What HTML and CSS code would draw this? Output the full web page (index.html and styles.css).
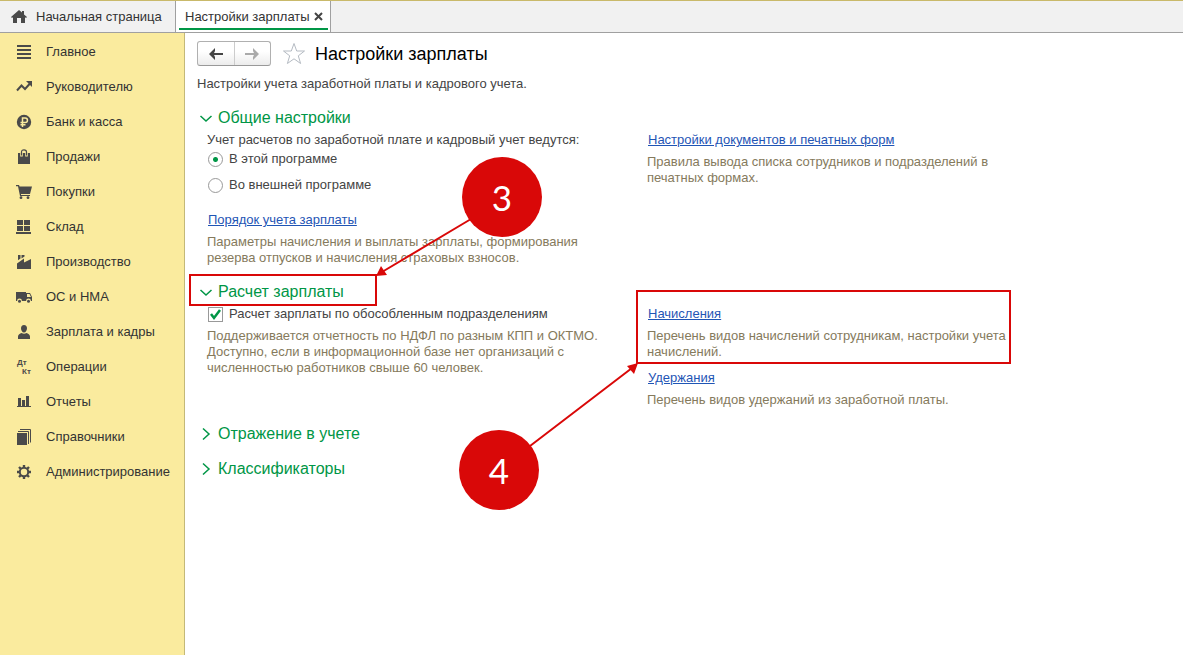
FILE: index.html
```html
<!DOCTYPE html>
<html lang="ru">
<head>
<meta charset="utf-8">
<title>Настройки зарплаты</title>
<link rel="stylesheet" href="styles.css">
</head>
<body>
<header class="tabs">
  <button class="tab tab-home" type="button">
    <svg class="home-icon" width="16" height="14" viewBox="0 0 16 14"><path d="M8 0 0 7l1 1 1-.7V13h4V8h4v5h4V7.300l1 .7 1-1-3-2.600V1h-2v1.600z"/></svg>
    <span>Начальная страница</span>
  </button>
  <div class="tab tab-active">
    <button class="tab-label" type="button">Настройки зарплаты</button>
    <button class="tab-close" type="button" aria-label="Закрыть"><svg width="9" height="9" viewBox="0 0 9 9"><path d="M1 1l7 7M8 1 1 8" fill="none" stroke="#444" stroke-width="2"/></svg></button>
  </div>
</header>
<div class="layout">
  <nav class="sidebar">
    <a href="#" class="nav-item"><svg class="icon" viewBox="0 0 16 16"><path d="M1 1h14v2H1zM1 5h14v2H1zM1 9h14v2H1zM1 13h14v2H1z"/></svg>Главное</a>
    <a href="#" class="nav-item"><svg class="icon" viewBox="0 0 16 16"><path d="M1 11.500 5.500 6.500l3.500 3.500 5-5.500" fill="none" stroke="#4a4a4a" stroke-width="2"/><path d="M10 2h6v6z"/></svg>Руководителю</a>
    <a href="#" class="nav-item"><svg class="icon" viewBox="0 0 16 16"><circle cx="8" cy="8" r="7.200"/><path d="M6.500 13V4h2.700a2.200 2.200 0 0 1 0 4.500H4.500M4.500 10.800h5" fill="none" stroke="#faeb9e" stroke-width="1.500"/></svg>Банк и касса</a>
    <a href="#" class="nav-item"><svg class="icon" viewBox="0 0 16 16"><path d="M2 4h12v11H2z"/><path d="M5.500 7.500V3.500Q5.500 1 8 1t2.500 2.500v4" fill="none" stroke="#faeb9e" stroke-width="2.600"/><path d="M5.500 6.500V3Q5.500 .8 8 .8t2.500 2.200v3.500" fill="none" stroke="#4a4a4a" stroke-width="1.200"/></svg>Продажи</a>
    <a href="#" class="nav-item"><svg class="icon" viewBox="0 0 16 16"><path d="M0 1h3l.6 1.500H16L14 10H5v1h9v1H4L2 2.200H0z"/><circle cx="5" cy="13.700" r="1.400"/><circle cx="12" cy="13.700" r="1.400"/></svg>Покупки</a>
    <a href="#" class="nav-item"><svg class="icon" viewBox="0 0 16 16"><path d="M1 1h6v5H1zM8 1h6v5H8zM1 7h6v5H1zM8 7h6v5H8zM0 13h15v2H0z"/></svg>Склад</a>
    <a href="#" class="nav-item"><svg class="icon" viewBox="0 0 16 16"><path d="M1 15V9.500l7-5V8.500L15 5v10zM2 1h2.500v3.500L2 6.300zM5.500 1H8.500v1.500l-3 2z"/></svg>Производство</a>
    <a href="#" class="nav-item"><svg class="icon" viewBox="0 0 16 16"><path fill-rule="evenodd" d="M0 3h10v1h4l2 4v4H0zM11 5v3h4l-1.500-3z"/><circle cx="3.500" cy="12" r="2.400" fill="#faeb9e"/><circle cx="12.500" cy="12" r="2.400" fill="#faeb9e"/><circle cx="3.500" cy="12.300" r="1.500"/><circle cx="12.500" cy="12.300" r="1.500"/></svg>ОС и НМА</a>
    <a href="#" class="nav-item"><svg class="icon" viewBox="0 0 16 16"><path d="M8 1c2 0 3 1.300 3 3.200S9.800 8.500 8 8.500 5 6.100 5 4.200 6 1 8 1zM2 15v-2.500C2 10.500 4 9.500 5.500 9q2.500 1.500 5 0c1.500.5 3.500 1.500 3.500 3.500V15z"/></svg>Зарплата и кадры</a>
    <a href="#" class="nav-item"><svg class="icon" viewBox="0 0 16 16"><text class="icon-text" x="1" y="6">Дт</text><text class="icon-text" x="6" y="15">Кт</text></svg>Операции</a>
    <a href="#" class="nav-item"><svg class="icon" viewBox="0 0 16 16"><path d="M2 4h3v8H2zM6 6h3v6H6zM10 2h3v10h-3zM1 12h14v1H1z"/></svg>Отчеты</a>
    <a href="#" class="nav-item"><svg class="icon" viewBox="0 0 16 16"><path d="M1 4h10v12H1z"/><path d="M2 2.500h10.500V15M4 .5h10.500v13" fill="none" stroke="#4a4a4a"/></svg>Справочники</a>
    <a href="#" class="nav-item"><svg class="icon" viewBox="0 0 16 16"><circle cx="8" cy="8" r="4.200" fill="none" stroke="#4a4a4a" stroke-width="2"/><path d="M8 1v3M8 12v3M1 8h3M12 8h3M3 3l2 2M11 11l2 2M13 3l-2 2M5 11l-2 2" stroke="#4a4a4a" stroke-width="2.400"/></svg>Администрирование</a>
  </nav>
  <main class="content">
    <div class="toolbar">
      <div class="history">
        <button type="button" aria-label="Назад"><svg width="14" height="12" viewBox="0 0 14 12"><path d="M0 6 6 0v3L5 5h9v2H5l1 2v3z" fill="#444"/></svg></button>
        <button type="button" aria-label="Вперед"><svg width="14" height="12" viewBox="0 0 14 12"><path d="M14 6 8 0v3l1 2H0v2h9L8 9v3z" fill="#aaa"/></svg></button>
      </div>
      <button class="star" type="button" aria-label="В избранное"><svg width="24" height="24" viewBox="0 0 24 24"><path d="M12 1.500 14.700 9h7.800l-6.200 4.800 2.300 7.700-6.600-4.700-6.600 4.700 2.300-7.700L1.500 9h7.800z" fill="none" stroke="#b4bac2"/></svg></button>
      <h1 class="title">Настройки зарплаты</h1>
    </div>
    <p class="lead">Настройки учета заработной платы и кадрового учета.</p>

    <section class="section general">
      <h2><button class="section-toggle" type="button" aria-expanded="true"><svg width="14" height="14" viewBox="0 0 14 14"><path d="M1.500 5 7 10l5.500-5"/></svg>Общие настройки</button></h2>
      <div class="columns">
        <div>
          <fieldset class="options">
            <legend>Учет расчетов по заработной плате и кадровый учет ведутся:</legend>
            <label class="option"><input type="radio" name="place" checked>В этой программе</label>
            <label class="option"><input type="radio" name="place">Во внешней программе</label>
          </fieldset>
          <a class="link" href="#">Порядок учета зарплаты</a>
          <p class="hint">Параметры начисления и выплаты зарплаты, формирования<br>резерва отпусков и начисления страховых взносов.</p>
        </div>
        <div>
          <a class="link" href="#">Настройки документов и печатных форм</a>
          <p class="hint">Правила вывода списка сотрудников и подразделений в<br>печатных формах.</p>
        </div>
      </div>
    </section>

    <section class="section payroll">
      <h2><button class="section-toggle" type="button" aria-expanded="true"><svg width="14" height="14" viewBox="0 0 14 14"><path d="M1.500 5 7 10l5.500-5"/></svg>Расчет зарплаты</button></h2>
      <div class="columns">
        <div>
          <label class="option check"><input type="checkbox" checked>Расчет зарплаты по обособленным подразделениям</label>
          <p class="hint">Поддерживается отчетность по НДФЛ по разным КПП и ОКТМО.<br>Доступно, если в информационной базе нет организаций с<br>численностью работников свыше 60 человек.</p>
        </div>
        <div>
          <a class="link" href="#">Начисления</a>
          <p class="hint">Перечень видов начислений сотрудникам, настройки учета<br>начислений.</p>
          <a class="link next" href="#">Удержания</a>
          <p class="hint">Перечень видов удержаний из заработной платы.</p>
        </div>
      </div>
    </section>

    <section class="section closed">
      <h2><button class="section-toggle" type="button" aria-expanded="false"><svg width="14" height="14" viewBox="0 0 14 14"><path d="m4 1.500 6 5.500-6 5.500"/></svg>Отражение в учете</button></h2>
    </section>
    <section class="section closed">
      <h2><button class="section-toggle" type="button" aria-expanded="false"><svg width="14" height="14" viewBox="0 0 14 14"><path d="m4 1.500 6 5.500-6 5.500"/></svg>Классификаторы</button></h2>
    </section>
  </main>
</div>
<svg class="callouts" width="1020" height="520" viewBox="0 0 1020 520">
  <g fill="none" stroke="#d90808" stroke-width="2">
    <rect x="190" y="275" width="186" height="30"/>
    <rect x="637" y="291" width="373" height="72"/>
    <path d="M471 219 382 272M530 446l102-78"/>
  </g>
  <g fill="#d90808">
    <path d="m376 276 5-10 6 9zM638 363l-11 3 7 8z"/>
    <circle cx="502" cy="197" r="40"/>
    <circle cx="499" cy="470" r="40"/>
  </g>
  <text class="callout-number" x="502" y="211">3</text>
  <text class="callout-number" x="499" y="484">4</text>
</svg>
</body>
</html>
```

FILE: styles.css
```css
* { box-sizing: border-box; }

body {
  margin: 0;
  min-height: 100vh;
  display: flex;
  flex-direction: column;
  position: relative;
  background: #fff;
  color: #444;
  font: 13px/16px "Liberation Sans", Arial, sans-serif;
}

button {
  margin: 0;
  padding: 0;
  border: 0;
  background: none;
  color: inherit;
  font: inherit;
}

h1, h2, p { margin: 0; font-weight: normal; }

.tabs {
  display: flex;
  height: 33px;
  background: #f1f1f1;
  border-top: 1px solid #c9b96a;
  border-bottom: 1px solid #a0a0a0;
}

.tab {
  display: flex;
  align-items: center;
  border-right: 1px solid #a0a0a0;
  color: #333;
}

.tab-home { width: 176px; padding-left: 11px; gap: 9px; }
.home-icon { fill: #4a4a4a; }

.tab-active {
  width: 155px;
  padding: 0 7px 0 9px;
  justify-content: space-between;
  background: linear-gradient(#009646, #009646) 50% calc(100% - 2px) / 149px 2px no-repeat #fff;
}

.tab-close { display: flex; }

.layout { flex: 1; display: flex; }

.sidebar {
  flex: none;
  width: 185px;
  padding-top: 1px;
  background: #faeb9e;
  border-right: 1px solid #c4b978;
}

.nav-item {
  display: flex;
  align-items: center;
  height: 35px;
  padding-left: 16px;
  gap: 14px;
  color: #333;
  text-decoration: none;
}

.icon { width: 16px; height: 16px; fill: #4a4a4a; }
.icon-text { font: bold 8px "Liberation Sans", Arial, sans-serif; }

.content { flex: 1; padding: 8px 12px; }

.toolbar { display: flex; align-items: center; height: 25px; }

.history {
  display: flex;
  width: 74px;
  height: 25px;
  border: 1px solid #b0b0b0;
  border-bottom-color: #999;
  border-radius: 3px;
  background: linear-gradient(#fff 40%, #ececec);
}

.history button { flex: 1; display: flex; align-items: center; justify-content: center; }
.history button + button { border-left: 1px solid #ccc; }

.star { display: flex; margin: 0 9px 0 11px; }

.title { color: #000; font-size: 18px; line-height: 24px; }
.lead { margin-top: 10px; }

.section { margin-top: 16px; }
.section.closed { margin-top: 15px; }
.payroll + .section.closed { margin-top: 16px; }

.section-toggle {
  display: flex;
  align-items: center;
  gap: 5px;
  height: 20px;
  padding-left: 2px;
  color: #009646;
  font-size: 16px;
  line-height: 20px;
}

.section-toggle svg { fill: none; stroke: #009646; stroke-width: 1.500; }

.columns {
  display: grid;
  grid-template-columns: 440px 1fr;
  padding: 4px 0 0 10px;
}

.options { margin: 0 0 19px; padding: 0; border: 0; }
.options legend { padding: 0; }

.option { display: flex; align-items: center; gap: 6px; height: 16px; }
.option + .option { margin-top: 10px; }
.options legend + .option { margin-top: 3px; }

.option input {
  appearance: none;
  width: 15px;
  height: 15px;
  margin: 0 0 0 1px;
  border: 1px solid #999;
  background: #fff;
}

.option input[type="radio"] { border-radius: 50%; }
.option input[type="radio"]:checked { background: radial-gradient(circle, #009646 2px, #fff 3px); }

.option input[type="checkbox"]:checked {
  background: url('data:image/svg+xml,<svg xmlns="http://www.w3.org/2000/svg" viewBox="0 0 13 13"><path d="m2 6 3 4 6-8" fill="none" stroke="%23009646" stroke-width="2.500"/></svg>');
}

.link { display: block; width: fit-content; margin-left: 1px; color: #1f55b5; }
.link.next { margin-top: 10px; }
.hint { margin-top: 6px; color: #857a5c; }

.callouts { position: absolute; top: 0; left: 0; pointer-events: none; }

.callout-number {
  fill: #fff;
  font: 35px Lato, sans-serif;
  text-anchor: middle;
}
```
